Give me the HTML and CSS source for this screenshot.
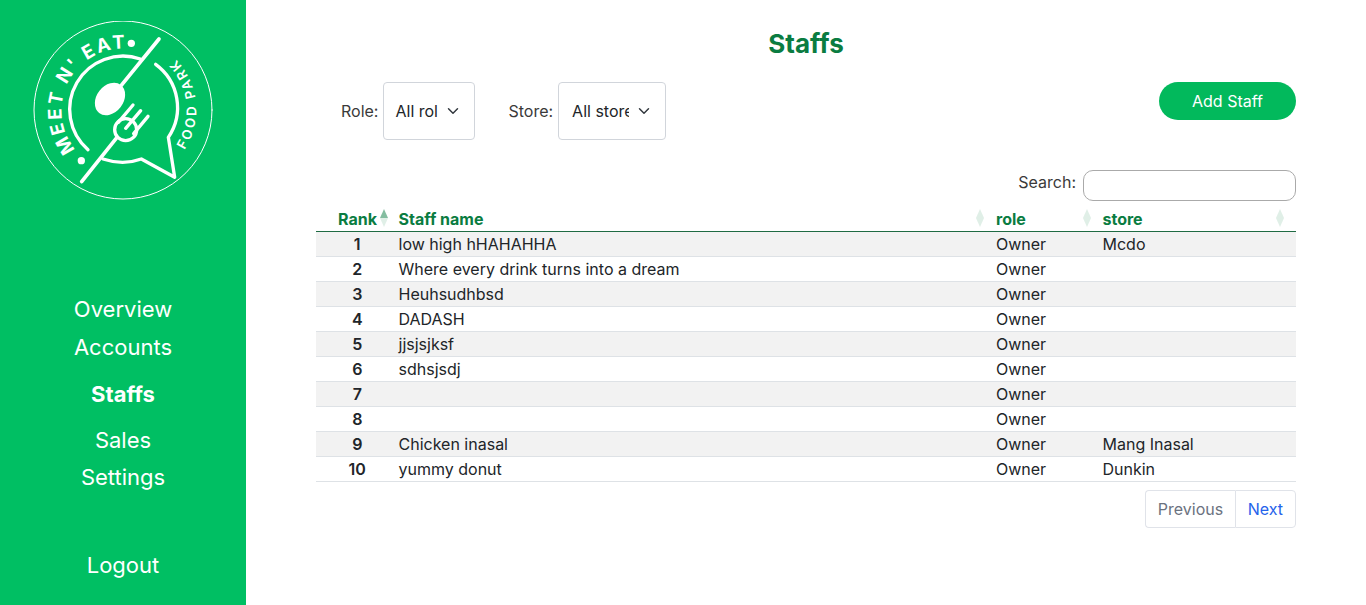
FILE: index.html
```html
<!DOCTYPE html>
<html lang="en">
<head>
    <meta charset="UTF-8">
    <meta name="viewport" content="width=device-width, initial-scale=1.0">
    <title>Staffs</title>
    <link rel="stylesheet" href="styles.css">
</head>
<body>

<div class="layout">
    <aside class="sidebar">
        <svg class="logo" viewBox="40 36 540 540" fill="none" stroke="#fff" stroke-linecap="round" stroke-linejoin="round">
            <defs>
                <path id="meetArc" d="M 168 422 A 185 185 0 0 1 400 142"></path>
                <path id="foodArc" d="M 494 423 A 220 220 0 0 0 400 102"></path>
            </defs>
            <circle cx="310" cy="303" r="267" stroke-width="3"></circle>
            <path d="M205 422 A160 160 0 0 1 362 150" stroke-width="10"></path>
            <path d="M408 166 A160 160 0 0 1 446 385 L465 505 L365 450 Q310 470 250 450" stroke-width="10"></path>
            <path d="M418 90 L300 235" stroke-width="11"></path>
            <ellipse cx="271" cy="270" rx="40" ry="53" transform="rotate(38 271 270)" fill="#fff" stroke="none"></ellipse>
            <path d="M186 518 L292 385" stroke-width="11"></path>
            <circle cx="318" cy="362" r="33" stroke-width="10"></circle>
            <path d="M340 288 L296 340 M363 305 L318 358 M385 322 L342 374" stroke-width="10"></path>
            <circle cx="335" cy="103" r="11" fill="#fff" stroke="none"></circle>
            <circle cx="185" cy="455" r="11" fill="#fff" stroke="none"></circle>
            <text class="logo-meet"><textPath href="#meetArc">MEET N' EAT</textPath></text>
            <text class="logo-food"><textPath href="#foodArc">FOOD PARK</textPath></text>
        </svg>
        <nav class="nav">
            <a href="#">Overview</a>
            <a href="#">Accounts</a>
            <a href="#" class="active">Staffs</a>
            <a href="#" class="sales">Sales</a>
            <a href="#">Settings</a>
            <a href="#" class="logout">Logout</a>
        </nav>
    </aside>

    <main class="content">
        <h1>Staffs</h1>

        <div class="toolbar">
            <div class="filters">
                <label class="filter">Role:
                    <select class="role-select"><option>All roles</option></select>
                </label>
                <label class="filter">Store:
                    <select class="store-select"><option>All stores</option></select>
                </label>
            </div>
            <button class="add-btn">Add Staff</button>
        </div>

        <div class="search-row">
            <label for="search">Search:</label>
            <input type="search" id="search">
        </div>

        <table class="staff-table">
            <thead>
                <tr>
                    <th class="rank sorted">Rank</th>
                    <th class="name">Staff name</th>
                    <th class="role">role</th>
                    <th class="store">store</th>
                </tr>
            </thead>
            <tbody>
                <tr><td class="rank">1</td><td>low high hHAHAHHA</td><td>Owner</td><td>Mcdo</td></tr>
                <tr><td class="rank">2</td><td>Where every drink turns into a dream</td><td>Owner</td><td></td></tr>
                <tr><td class="rank">3</td><td>Heuhsudhbsd</td><td>Owner</td><td></td></tr>
                <tr><td class="rank">4</td><td>DADASH</td><td>Owner</td><td></td></tr>
                <tr><td class="rank">5</td><td>jjsjsjksf</td><td>Owner</td><td></td></tr>
                <tr><td class="rank">6</td><td>sdhsjsdj</td><td>Owner</td><td></td></tr>
                <tr><td class="rank">7</td><td></td><td>Owner</td><td></td></tr>
                <tr><td class="rank">8</td><td></td><td>Owner</td><td></td></tr>
                <tr><td class="rank">9</td><td>Chicken inasal</td><td>Owner</td><td>Mang Inasal</td></tr>
                <tr><td class="rank">10</td><td>yummy donut</td><td>Owner</td><td>Dunkin</td></tr>
            </tbody>
        </table>

        <div class="pager">
            <a href="#" class="disabled">Previous</a>
            <a href="#">Next</a>
        </div>
    </main>
</div>

</body>
</html>
```

FILE: styles.css
```css
* {
    box-sizing: border-box;
}

body {
    margin: 0;
    font-family: Inter, "Liberation Sans", sans-serif;
    font-size: 16px;
    color: #212529;
    background-color: #fff;
}

.layout {
    display: flex;
    height: 605px;
    overflow: hidden;
}

/* Sidebar */
.sidebar {
    width: 246px;
    flex-shrink: 0;
    background-color: #00bf63;
    display: flex;
    flex-direction: column;
    align-items: center;
    padding-top: 21px;
}

.logo {
    width: 180px;
    height: 180px;
    display: block;
}

.logo-meet {
    font-family: Inter, sans-serif;
    font-size: 56px;
    font-weight: 700;
    letter-spacing: 7px;
    fill: #fff;
    stroke: none;
}

.logo-food {
    font-family: Inter, sans-serif;
    font-size: 40px;
    font-weight: 600;
    letter-spacing: 8px;
    fill: #fff;
    stroke: none;
}

.nav {
    display: flex;
    flex-direction: column;
    align-items: center;
    margin-top: 95px;
}

.nav a {
    color: #fff;
    text-decoration: none;
    font-size: 22px;
    line-height: 27px;
    margin-bottom: 11px;
}

.nav a.active {
    font-weight: 700;
    margin-top: 9px;
    margin-bottom: 19px;
}

.nav a.sales {
    margin-bottom: 10px;
}

.nav a.logout {
    margin-top: 50px;
}

/* Main area */
.content {
    flex: 1;
    padding: 0 70px;
}

h1 {
    margin: 27px 0 0;
    font-size: 26px;
    line-height: 34px;
    font-weight: 700;
    text-align: center;
    color: #0a7c41;
}

.toolbar {
    display: flex;
    justify-content: space-between;
    align-items: flex-start;
    margin-top: 21px;
}

.filters {
    display: flex;
    gap: 33px;
    padding-left: 25px;
}

.filter {
    display: flex;
    align-items: center;
    gap: 5px;
    color: #3a3a3a;
}

select {
    height: 58px;
    padding: 6px 36px 6px 12px;
    font-family: inherit;
    font-size: 16px;
    color: #212529;
    background-color: #fff;
    background-image: url("data:image/svg+xml,%3csvg xmlns='http://www.w3.org/2000/svg' viewBox='0 0 16 16'%3e%3cpath fill='none' stroke='%23343a40' stroke-linecap='round' stroke-linejoin='round' stroke-width='2' d='m2 5 6 6 6-6'/%3e%3c/svg%3e");
    background-repeat: no-repeat;
    background-position: right 13px center;
    background-size: 16px 12px;
    border: 1px solid #d1d5db;
    border-radius: 4px;
    appearance: none;
}

.role-select {
    width: 92px;
    padding-left: 11px;
}

.store-select {
    width: 108px;
    padding-left: 13px;
}

.add-btn {
    width: 137px;
    height: 38px;
    font-family: inherit;
    font-size: 16px;
    font-weight: 400;
    color: #fff;
    background-color: #02b95c;
    border: none;
    border-radius: 19px;
    cursor: pointer;
}

.search-row {
    display: flex;
    justify-content: flex-end;
    align-items: center;
    gap: 7px;
    margin-top: 30px;
    color: #3a3a3a;
    font-size: 16px;
}

.search-row label {
    position: relative;
    top: -4px;
}

.search-row input {
    width: 213px;
    height: 31px;
    border: 1px solid #aaa;
    border-radius: 10px;
    background-color: transparent;
    padding: 5px;
}

/* Table */
.staff-table {
    width: 980px;
    margin-top: 5px;
    border-collapse: collapse;
    table-layout: fixed;
    font-size: 16px;
}

.staff-table th {
    position: relative;
    height: 25px;
    padding: 2px 8px 0;
    text-align: left;
    font-size: 16px;
    font-weight: 700;
    color: #0a7c41;
    border-bottom: 1px solid #1f6b43;
}

.staff-table th.rank {
    width: 74.5px;
    padding-left: 22px;
    padding-right: 0;
}

.staff-table th.role {
    width: 106.5px;
}

.staff-table th.store {
    width: 201.5px;
}

/* sort arrows */
.staff-table th::before,
.staff-table th::after {
    content: "";
    position: absolute;
    right: 4px;
    border-left: 4.5px solid transparent;
    border-right: 4.5px solid transparent;
    opacity: 0.125;
}

.staff-table th::before {
    top: 3px;
    border-bottom: 9px solid #0a7c41;
}

.staff-table th::after {
    top: 12px;
    border-top: 9px solid #0a7c41;
}

.staff-table th.store::before,
.staff-table th.store::after {
    right: 12px;
}

.staff-table th.rank::before,
.staff-table th.rank::after {
    right: 3px;
}

.staff-table th.rank::before {
    opacity: 0.5;
}

.staff-table td {
    height: 25px;
    padding: 0 8px;
    line-height: 24px;
    border-bottom: 1px solid #dee2e6;
    white-space: nowrap;
}

.staff-table td.rank {
    text-align: center;
    font-weight: 600;
    padding-left: 16px;
    padding-right: 8px;
}

.staff-table tbody tr:nth-child(odd) {
    background-color: #f2f2f2;
}

/* Pagination */
.pager {
    display: flex;
    justify-content: flex-end;
    margin-top: 8px;
}

.pager a {
    height: 38px;
    padding: 0 12px;
    line-height: 37px;
    color: #2563eb;
    text-decoration: none;
    border: 1px solid #e0e3e9;
}

.pager a:first-child {
    padding-right: 11.5px;
    border-radius: 4px 0 0 4px;
    border-right: none;
}

.pager a:last-child {
    border-radius: 0 4px 4px 0;
}

.pager a.disabled {
    color: #6b7280;
}
```
